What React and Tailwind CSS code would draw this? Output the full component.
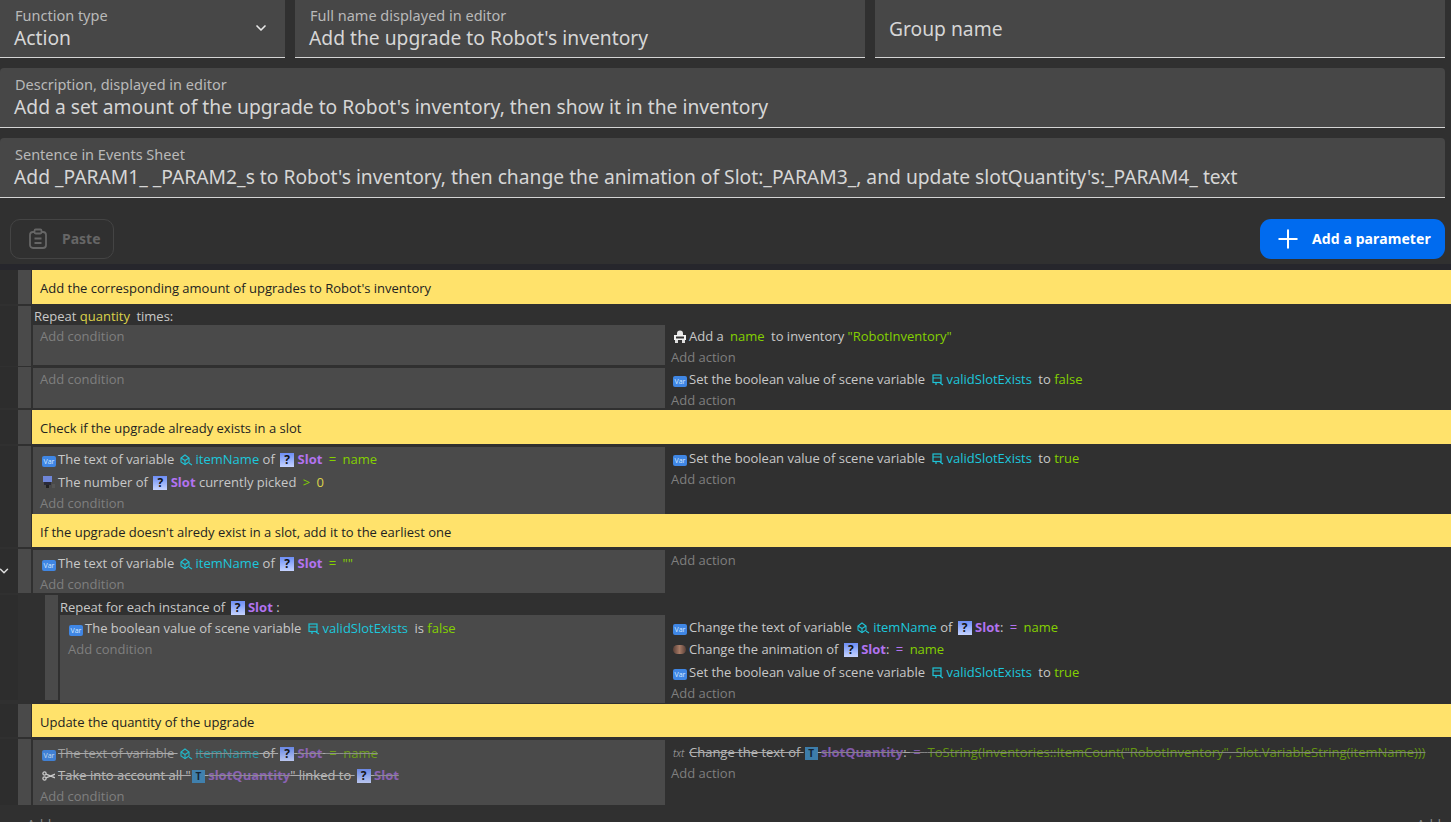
import React from "react";
import { ChevronDown, Plus } from "lucide-react";

const Field = ({ label, value, className = "", children }) => (
  <div className={`relative flex flex-col justify-center bg-[#474747] border-b border-[#d4d4d4] rounded-t-[4px] px-[15px] ${className}`}>
    {label && <div className="h-[18px] text-[14.5px] leading-[16px] text-[#b9b9b9]">{label}</div>}
    <div className="-ml-[1px] text-[19.25px] leading-[26px] text-[#d6d6d6] whitespace-nowrap">{value}</div>
    {children}
  </div>
);

const Var = ({ ml = "ml-[2px]" }) => (
  <span className={`inline-flex items-center justify-center w-[14px] h-[11px] rounded-[2px] bg-[#3f86e4] text-[7px] leading-none text-[#d5e6ff] align-baseline mr-[2px] ${ml}`}>Var</span>
);
const Q = () => (
  <span className="inline-flex items-center justify-center w-[14px] h-[14px] bg-gradient-to-b from-[#6d8df5] to-[#c6d3ff] text-[12px] font-bold leading-none text-[#111] align-baseline ml-[2px]">?</span>
);
const Txt = () => (
  <span className="inline-flex items-center justify-center w-[13px] h-[13px] bg-[#3f86b8] text-[10px] font-bold leading-none text-[#123] align-baseline ml-[1px]">T</span>
);
const ObjVar = () => (
  <svg className="inline-block align-[-2px] ml-[2px] mr-[3px]" width="13" height="12" viewBox="0 0 13 12" fill="none" stroke="#1fc3d6" strokeWidth="1.1">
    <path d="M1 4l4-3 4 3v4l-4 2.5L1 8z" />
    <path d="M1 4l4 2.5L9 4M5 6.5v4" />
    <path d="M9 9l3 2" />
  </svg>
);
const SceneVar = () => (
  <svg className="inline-block align-[-2px] ml-[3px] mr-[3px]" width="12" height="12" viewBox="0 0 12 12" fill="none" stroke="#1fc3d6" strokeWidth="1.2">
    <rect x="1" y="1" width="8" height="7.5" />
    <path d="M1 4h8M4 8.5v2.5M8 9l3 2" />
  </svg>
);
const Bag = () => (
  <svg className="inline-block align-[-2px] ml-[2px] mr-[2px]" width="14" height="13" viewBox="0 0 14 13">
    <path d="M4 5V3.5a3 3 0 0 1 6 0V5z" fill="#e8e8e8" />
    <rect x="1" y="5" width="12" height="5" fill="#f2f2f2" />
    <rect x="3" y="6.5" width="8" height="2" fill="#333" />
    <rect x="2" y="10" width="3" height="3" fill="#ddd" />
    <rect x="9" y="10" width="3" height="3" fill="#ddd" />
  </svg>
);
const Count = () => (
  <svg className="inline-block align-[-2px] ml-[2px] mr-[2px]" width="14" height="13" viewBox="0 0 14 13">
    <rect x="1" y="0" width="9" height="6" fill="#6f86d8" />
    <rect x="2" y="6" width="7" height="3" fill="#2a2a38" />
    <rect x="4" y="9" width="3" height="3" fill="#222" />
    <rect x="10" y="8" width="3" height="4" fill="#555" />
  </svg>
);
const Anim = () => (
  <span className="inline-block w-[13px] h-[9px] rounded-full bg-gradient-to-r from-[#5a4038] via-[#a87b66] to-[#5a4038] align-[0px] ml-[2px] mr-[3px]" />
);
const Scissors = () => (
  <svg className="inline-block align-[-1px] ml-[2px] mr-[3px]" width="13" height="10" viewBox="0 0 13 10" fill="none" stroke="#d8d8d8" strokeWidth="1.3">
    <circle cx="2.5" cy="2.5" r="1.6" />
    <circle cx="2.5" cy="7.5" r="1.6" />
    <path d="M4 3.2l9 3.6M4 6.8l9-3.6" />
  </svg>
);
const TxtIcon = () => (
  <span className="inline-block w-[13px] ml-[2px] text-[10px] italic leading-none text-[#9a9a9a] align-[0px] mr-[3px]">txt</span>
);

const N = ({ children }) => <span className="text-[#84d100]">{children}</span>;
const C = ({ children }) => <span className="text-[#1cc7dc]">{children}</span>;
const P = ({ children }) => <span className="font-bold text-[#b273f0]">{children}</span>;
const O = ({ children }) => <span className="text-[#b273f0]">{children}</span>;
const Y = ({ children }) => <span className="text-[#dcd24a]">{children}</span>;
const Sp = () => <span className="inline-block w-[3px]" />;

const Line = ({ children, className = "" }) => (
  <div className={`h-[22px] leading-[22px] whitespace-nowrap ${className}`}>{children}</div>
);
const AddC = ({ tall = false }) => (
  <div className={`whitespace-nowrap text-[#7f7f7f] ${tall ? "h-[22px] leading-[22px]" : "h-[20px] leading-[20px]"}`}>Add condition</div>
);
const AddA = () => <div className="h-[20px] leading-[20px] whitespace-nowrap text-[#7f7f7f]">Add action</div>;

const Gutter = ({ chevron }) => (
  <div className="w-[18px] shrink-0 flex items-center justify-start bg-[#2d2d2d] self-stretch">
    {chevron && <ChevronDown size={14} strokeWidth={2.5} className="text-[#dddddd] ml-[-3px]" />}
  </div>
);
const Handle = ({ className = "" }) => <div className={`w-[13px] shrink-0 bg-[#4a4a4a] ${className}`} />;

const Comment = ({ text, h, mt = "mt-0" }) => (
  <div className={`flex ${h} ${mt}`}>
    <Gutter />
    <Handle />
    <div className="flex-1 ml-[1px] bg-[#ffe26b] text-[#222222] flex items-center pl-[8px] pt-[4px]">{text}</div>
  </div>
);

const Event = ({ h, mt, chevron, conds, actions, condPt = "pt-0", actPt = "pt-[1px]" }) => (
  <div className={`flex ${h} ${mt}`}>
    <Gutter chevron={chevron} />
    <Handle />
    <div className={`w-[632px] ml-[2px] mt-[1px] bg-[#4a4a4a] pl-[7px] ${condPt}`}>{conds}</div>
    <div className={`flex-1 pl-[6px] ${actPt}`}>{actions}</div>
  </div>
);

const Strike = ({ children }) => <div className="line-through decoration-[#b5b5b5] opacity-90">{children}</div>;

export default function App() {
  return (
    <div className="w-[1451px] h-[822px] overflow-hidden bg-[#303030] text-[13px] text-[#c8c8c8]" style={{ fontFamily: '"Open Sans", sans-serif' }}>
      <div className="pr-[6px] flex flex-col gap-[10px]" style={{ fontFamily: '"Noto Sans", sans-serif' }}>
        <div className="flex gap-[10px] h-[58px]">
          <Field label="Function type" value="Action" className="w-[285px] rounded-t-none">
            <ChevronDown size={16} strokeWidth={2.5} className="absolute right-[16px] top-[20px] text-[#e8e8e8]" />
          </Field>
          <Field label="Full name displayed in editor" value="Add the upgrade to Robot's inventory" className="w-[570px] rounded-t-none" />
          <Field value="Group name" className="w-[570px] rounded-t-none" />
        </div>
        <Field label="Description, displayed in editor" value="Add a set amount of the upgrade to Robot's inventory, then show it in the inventory" className="h-[60px]" />
        <Field label="Sentence in Events Sheet" value="Add _PARAM1_ _PARAM2_s to Robot's inventory, then change the animation of Slot:_PARAM3_, and update slotQuantity's:_PARAM4_ text" className="h-[60px]" />
      </div>

      <div className="flex items-center justify-between pl-[10px] pr-[6px] mt-[21px] h-[40px]" style={{ fontFamily: '"Noto Sans", sans-serif' }}>
        <div className="flex items-center w-[104px] h-[40px] border border-[#444444] rounded-[10px] pl-[17px]">
          <svg width="20" height="22" viewBox="0 0 20 22" fill="none" stroke="#666666" strokeWidth="1.8">
            <rect x="2" y="4" width="16" height="16" rx="3" />
            <rect x="6.5" y="1.5" width="7" height="4" rx="1.2" fill="#303030" />
            <path d="M6.5 10.5h7M6.5 15h7" />
          </svg>
          <span className="ml-[14px] mb-[1px] text-[14px] font-bold text-[#666666]">Paste</span>
        </div>
        <div className="flex items-center w-[185px] h-[40px] bg-[#006bef] rounded-[11px] pl-[13px]">
          <Plus size={30} strokeWidth={1.6} className="text-white" />
          <span className="ml-[9px] mb-[2px] text-[14px] font-bold text-white tracking-[0.1px] whitespace-nowrap">Add a parameter</span>
        </div>
      </div>

      <div className="h-[6px] mt-[5px] bg-[#26262c]" />

      <Comment h="h-[34px]" text="Add the corresponding amount of upgrades to Robot's inventory" />

      <div className="flex h-[60px] mt-[2px]">
        <Gutter />
        <Handle />
        <div className="flex-1 flex flex-col">
          <div className="h-[19px] leading-[21px] pl-[3px]">Repeat <Y>quantity</Y><Sp /> times:</div>
          <div className="flex h-[40px]">
            <div className="w-[632px] ml-[2px] bg-[#4a4a4a] pl-[7px]"><AddC tall /></div>
            <div className="flex-1 pl-[6px]">
              <Line><Bag />Add a <Sp /><N>name</N><Sp /> to inventory <N>"RobotInventory"</N></Line>
              <AddA />
            </div>
          </div>
        </div>
      </div>

      <Event h="h-[41px]" mt="mt-[1px]" conds={<AddC tall />} actions={
        <>
          <Line><Var />Set the boolean value of scene variable <SceneVar /><C>validSlotExists</C><Sp /> to <N>false</N></Line>
          <AddA />
        </>
      } />

      <Comment h="h-[34px]" mt="mt-[2px]" text="Check if the upgrade already exists in a slot" />

      <Event h="h-[68px]" mt="mt-[2px]" condPt="pt-[1px]" conds={
        <>
          <Line><Var />The text of variable <ObjVar /><C>itemName</C> of <Q /> <P>Slot</P> <Sp /><N>=</N><Sp /> <N>name</N></Line>
          <Line className="mt-[1px]"><Count />The number of <Q /> <P>Slot</P> currently picked <Sp /><N>&gt;</N><Sp /> <Y>0</Y></Line>
          <AddC />
        </>
      } actions={
        <>
          <Line><Var />Set the boolean value of scene variable <SceneVar /><C>validSlotExists</C><Sp /> to <N>true</N></Line>
          <AddA />
        </>
      } />

      <Comment h="h-[33px]" text="If the upgrade doesn't alredy exist in a slot, add it to the earliest one" />

      <Event h="h-[44px]" mt="mt-[2px]" chevron condPt="pt-[2px]" conds={
        <>
          <Line><Var />The text of variable <ObjVar /><C>itemName</C> of <Q /> <P>Slot</P> <Sp /><N>=</N><Sp /> <N>""</N></Line>
          <AddC />
        </>
      } actions={<AddA />} />

      <div className="flex h-[105px] mt-[2px]">
        <Gutter />
        <div className="w-[40px] shrink-0 flex justify-end">
          <Handle className="w-[12px]" />
        </div>
        <div className="flex flex-col flex-1 ml-[2px]">
          <div className="h-[20px] leading-[24px]">Repeat for each instance of <Q /> <P>Slot</P> :</div>
          <div className="flex flex-1">
            <div className="w-[605px] bg-[#4a4a4a] pl-[8px] pt-[2px]">
              <Line><Var ml="ml-[1px]" />The boolean value of scene variable <SceneVar /><C>validSlotExists</C><Sp /> is <N>false</N></Line>
              <AddC />
            </div>
            <div className="flex-1 pl-[6px] pt-[1px]">
              <Line><Var />Change the text of variable <ObjVar /><C>itemName</C> of <Q /> <P>Slot</P>: <Sp /><O>=</O><Sp /> <N>name</N></Line>
              <Line><Anim />Change the animation of <Q /> <P>Slot</P>: <Sp /><O>=</O><Sp /> <N>name</N></Line>
              <Line className="mt-[1px]"><Var />Set the boolean value of scene variable <SceneVar /><C>validSlotExists</C><Sp /> to <N>true</N></Line>
              <AddA />
            </div>
          </div>
        </div>
      </div>

      <Comment h="h-[33px]" mt="mt-[4px]" text="Update the quantity of the upgrade" />

      <Event h="h-[66px]" mt="mt-[2px]" actPt="pt-[2px]" conds={
        <>
          <Line className="h-[24px] leading-[27px]"><Strike><Var /><span className="text-[#a8a8a8]">The text of variable </span><ObjVar /><span className="opacity-70"><C>itemName</C></span> of <Q /> <span className="opacity-70"><P>Slot</P></span> <span className="opacity-70"><N>&nbsp;=&nbsp;</N> <N>name</N></span></Strike></Line>
          <Line><Strike><Scissors />Take into account all "<Txt /> <span className="opacity-70"><P>slotQuantity</P></span>" linked to <Q /> <span className="opacity-70"><P>Slot</P></span></Strike></Line>
          <AddC />
        </>
      } actions={
        <>
          <Line><Strike><TxtIcon />Change the text of <Txt /> <span className="opacity-70"><P>slotQuantity</P></span>: <span className="opacity-70"><O>&nbsp;=&nbsp;</O> <N>ToString(Inventories::ItemCount("RobotInventory", Slot.VariableString(itemName)))</N></span></Strike></Line>
          <AddA />
        </>
      } />

      <div className="flex justify-between pl-[27px] pr-[10px] mt-[10px] text-[#8a8a8a]">
        <span>Add</span>
        <span>Add</span>
      </div>
    </div>
  );
}
